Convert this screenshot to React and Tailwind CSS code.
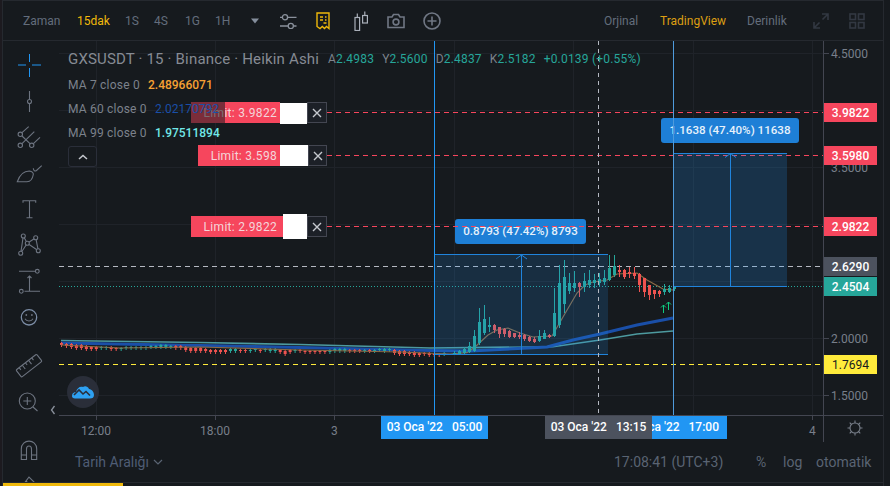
import React from "react";

const BG = "bg-[#161a1e]";

const candles = [
  [454, 351, 355, 353, 355, 1], [459, 350, 355, 351, 354, 1], [464, 347, 354, 349, 353, 1],
  [469, 342, 353, 346, 352, 1], [474, 330, 352, 336, 351, 1], [479, 308, 345, 322, 343, 1],
  [484, 305, 335, 319, 333, 1], [489, 317, 332, 325, 327, 1], [494, 324, 333, 325, 330, 0],
  [499, 327, 338, 327, 334, 0], [504, 328, 337, 329, 334, 0], [509, 330, 338, 331, 337, 0],
  [514, 333, 338, 333, 337, 0], [519, 332, 339, 335, 337, 0], [524, 334, 341, 335, 339, 0],
  [529, 336, 342, 337, 341, 0], [534, 337, 343, 339, 342, 0], [539, 330, 342, 336, 341, 1],
  [544, 330, 339, 333, 339, 1], [549, 334, 338, 335, 337, 0], [554, 288, 337, 313, 336, 1],
  [559, 265, 328, 283, 325, 1], [564, 260, 313, 277, 304, 1], [569, 273, 294, 283, 291, 1],
  [574, 271, 292, 283, 288, 1], [579, 282, 297, 283, 287, 0], [584, 273, 292, 281, 287, 1],
  [589, 270, 288, 280, 285, 1], [594, 274, 288, 280, 283, 1], [599, 273, 287, 279, 283, 1],
  [604, 270, 285, 278, 282, 1], [609, 255, 281, 268, 280, 1], [614, 255, 277, 266, 275, 1],
  [619, 265, 277, 270, 272, 0], [624, 269, 279, 270, 277, 0], [629, 267, 278, 272, 274, 0],
  [634, 267, 279, 273, 276, 0], [639, 273, 292, 274, 285, 0], [644, 278, 297, 278, 292, 0],
  [649, 285, 300, 285, 295, 0], [654, 290, 299, 290, 294, 0], [659, 290, 297, 291, 294, 0],
  [664, 284, 295, 289, 292, 1], [669, 285, 293, 288, 292, 1], [674, 286, 291, 287, 289, 1],
];

// flat part of the chart before the move: [green, top, height]
const flat = [
  [0, 343, 2], [0, 344, 2], [0, 344, 3], [0, 345, 3], [0, 345, 3], [0, 346, 3], [0, 347, 2], [0, 347, 2],
  [1, 347, 1], [1, 347, 1], [0, 347, 2], [0, 348, 1], [1, 348, 1], [1, 347, 1], [1, 347, 1], [1, 347, 1],
  [1, 347, 1], [1, 347, 1], [1, 346, 1], [1, 346, 1], [1, 345, 2], [1, 345, 2], [1, 346, 1], [0, 346, 2],
  [0, 346, 2], [0, 347, 3], [0, 348, 3], [0, 348, 3], [0, 348, 3], [0, 349, 2], [0, 350, 2], [0, 350, 2],
  [0, 350, 2], [0, 350, 2], [1, 349, 2], [1, 349, 2], [0, 350, 1], [0, 350, 1], [1, 350, 1], [1, 349, 1],
  [0, 350, 1], [1, 349, 1], [1, 349, 2], [1, 349, 2], [0, 350, 2], [0, 351, 3], [0, 350, 2], [1, 350, 1],
  [0, 350, 1], [0, 351, 1], [0, 351, 1], [0, 351, 1], [0, 351, 1], [0, 351, 1], [1, 350, 2], [1, 349, 2],
  [1, 349, 2], [1, 349, 2], [0, 350, 1], [0, 350, 1], [0, 350, 1], [1, 350, 1], [0, 350, 1], [1, 350, 1],
  [1, 349, 1], [1, 349, 2], [1, 349, 1], [0, 350, 3], [0, 351, 3], [0, 351, 3], [0, 352, 2], [0, 352, 3],
  [0, 353, 2], [0, 353, 1], [0, 353, 2], [0, 354, 1], [0, 354, 1], [1, 353, 1],
];

const ma7 = "M61 345 L120 348 L200 347 L300 350 L400 352 L450 354 L467 352.7 L475 347 L488 335 L497 330 L508 328 L520 333 L533 337 L552 336 L563 317 L577 293 L585 285 L593 282 L607 280 L617 274 L637 273 L647 280 L663 289 L673 290";
const ma60 = "M61 343 L200 345.5 L300 347.5 L430 350.5 L470 351 L547 347 L573 340 L600 334 L637 325 L673 318";
const ma99 = "M61 340.5 L200 342.5 L300 344.5 L430 348 L553 346.7 L600 340 L637 334 L673 331";

const gridX = [96, 215, 334, 454, 573, 693, 812];
const gridY = [53, 110, 167, 224, 281, 338, 395];

function ChartSvg() {
  return (
    <svg className="absolute inset-0 h-full w-full" viewBox="59 41 764 374">
      {gridX.map((x) => (
        <line key={x} x1={x + 0.5} x2={x + 0.5} y1="41" y2="415" stroke="#1f2329" />
      ))}
      {gridY.map((y) => (
        <line key={y} x1="59" x2="823" y1={y + 0.5} y2={y + 0.5} stroke="#1f2329" />
      ))}
      <line x1="59" x2="823" y1="266.5" y2="266.5" stroke="#b5b9c2" strokeDasharray="5 4" />
      <line x1="59" x2="823" y1="286.5" y2="286.5" stroke="#26a69a" strokeDasharray="1 2" />
      <line x1="59" x2="823" y1="364.5" y2="364.5" stroke="#ffeb3b" strokeDasharray="5 4" />
      <line x1="327" x2="823" y1="112.5" y2="112.5" stroke="#f6465d" strokeDasharray="5 4" />
      <line x1="327" x2="823" y1="155.5" y2="155.5" stroke="#f6465d" strokeDasharray="5 4" />

      <path d={ma99} fill="none" stroke="#4d9a9f" strokeWidth="1.6" />
      <path d={ma60} fill="none" stroke="#1a4fa8" strokeWidth="3" />
      {flat.map(([g, y, h], i) => (
        <g key={i} fill={g ? "#26a69a" : "#ef5350"}>
          <rect x={61 + i * 4.97} y={y - 1} width="1" height={h + 3} />
          <rect x={60 + i * 4.97} y={y} width="3" height={h} />
        </g>
      ))}
      <path d={ma7} fill="none" stroke="#8a6a45" strokeWidth="1.2" />
      {candles.map(([x, wt, wb, bt, bb, g]) => (
        <g key={x} fill={g ? "#26a69a" : "#ef5350"}>
          <rect x={x} y={wt} width="1" height={wb - wt} />
          <rect x={x - 1} y={bt} width="3" height={bb - bt} />
        </g>
      ))}

      <rect x="434" y="254" width="174" height="100" fill="#2196f3" fillOpacity="0.17" />
      <rect x="673" y="153" width="114" height="133" fill="#2196f3" fillOpacity="0.2" />
      <g stroke="#2084dc" fill="none">
        <path d="M434 254.5 H608 M434 354.5 H608 M521.5 254 V354 M516 259 L521.5 255 L527 259" />
        <path d="M673 153.5 H787 M673 286.5 H787 M730.5 153 V286 M725 157.5 L730.5 153.5 L736 157.5" />
      </g>
      <line x1="598.5" x2="598.5" y1="41" y2="415" stroke="#b5b9c2" strokeDasharray="4 4" />
      <line x1="434.5" x2="434.5" y1="41" y2="415" stroke="#2196f3" />
      <g stroke="#0ecb81" fill="none">
        <path d="M663.5 313 V305 M661 307.5 L663.5 305 L666 307.5" />
        <path d="M668.5 310 V302 M666 304.5 L668.5 302 L671 304.5" />
      </g>
    </svg>
  );
}

function LimitRow({ text, red, white, close }) {
  return (
    <>
      <div className={`absolute flex h-[21px] items-center justify-end bg-[#f6465d] text-[12px] tracking-[0.3px] text-[#f4d5da] ${red}`}>
        {text}
      </div>
      <div className={white}></div>
      <div className={close}>
        <svg width="12" height="12" viewBox="0 0 12 12" stroke="#c5c8ce" strokeWidth="1.4">
          <path d="M2 2 L10 10 M10 2 L2 10" />
        </svg>
      </div>
    </>
  );
}

function Cell({ className, children }) {
  return (
    <svg className={className} width="28" height="28" viewBox="0 0 28 28" fill="none" stroke="#6d7480" strokeWidth="1.1">
      {children}
    </svg>
  );
}

function LeftTools() {
  return (
    <div className="relative flex h-full w-[56px] shrink-0 flex-col overflow-hidden pl-[12px]">
      <Cell className="mt-[10px] shrink-0">
        <path stroke="#2196f3" strokeWidth="1" d="M3 14 H11 M17 14 H26 M14.5 3 V11 M14.5 17 V26" />
      </Cell>
      <Cell className="mt-[8px] shrink-0">
        <path d="M14.5 4 V12.5 M14.5 16.5 V25" />
        <circle cx="14.5" cy="14.5" r="2" />
      </Cell>
      <Cell className="mt-[11px] shrink-0">
        <circle cx="5.3" cy="8.3" r="2.2" />
        <circle cx="5.3" cy="19.3" r="2.2" />
        <circle cx="16.7" cy="19.3" r="2.2" />
        <path d="M7 6.7 L13.7 0.7 M7 17.7 L19.3 5.7 M18.4 17.7 L25 11.3 M7 10 L15 17.6" />
      </Cell>
      <Cell className="mt-[5px] shrink-0">
        <path d="M2.3 22.7 C5 15 9 12 14.3 12 C17 12.5 18.5 14 18.3 15.5 C17.5 20 15 22.7 12 22.7 Z" />
        <path d="M18.3 9.3 C18.5 12 20 12.5 21.5 11.5 L26.7 6.7" />
      </Cell>
      <Cell className="mt-[7px] shrink-0">
        <path d="M8 8.8 V6.7 H20.7 V8.8 M14.5 6.7 V23.7 M11.5 23.7 H17.5" />
      </Cell>
      <Cell className="mt-[8px] shrink-0">
        <path d="M8.3 6 L5.7 23.3 M8.3 6 L12.3 13.3 M12.3 13.3 L20.7 7.7 M20.7 7.7 L23.3 20.7 M12.3 13.3 L23.3 20.7 M12.3 13.3 L5.7 23.3" />
        <g fill="#161a1e">
          <circle cx="8.3" cy="6" r="2" />
          <circle cx="20.7" cy="7.7" r="2" />
          <circle cx="12.3" cy="13.3" r="2" />
          <circle cx="5.7" cy="23.3" r="2" />
          <circle cx="23.3" cy="20.7" r="2" />
        </g>
      </Cell>
      <Cell className="mt-[10px] shrink-0">
        <path d="M4 3.3 H20.5 M9.5 23.3 H25 M14.5 23.3 V8 M12.5 10 L14.5 8 L16.5 10" />
        <circle cx="22.3" cy="3.3" r="1.9" />
        <circle cx="6.3" cy="23.3" r="1.9" />
      </Cell>
      <Cell className="mt-[7px] shrink-0">
        <circle cx="14" cy="14.3" r="7.7" stroke="#7c8da6" strokeWidth="1.3" />
        <circle cx="11.3" cy="12" r="0.9" fill="#6d7480" stroke="none" />
        <circle cx="16.9" cy="12" r="0.9" fill="#6d7480" stroke="none" />
        <path d="M10 15.8 C11.5 18.7 16.5 18.7 18 15.8" />
      </Cell>
      <Cell className="mt-[22px] shrink-0">
        <g transform="rotate(-38 14 12.7)">
          <rect x="1" y="8.2" width="26" height="9" rx="1" />
          <path d="M5 8.2 V11 M9 8.2 V13 M13 8.2 V11 M17 8.2 V13 M21 8.2 V11" />
        </g>
      </Cell>
      <Cell className="mt-[6px] shrink-0">
        <circle cx="12.3" cy="14" r="8" />
        <path d="M12.3 10 V18 M8.3 14 H16.3 M18 20 L22.5 24" />
      </Cell>
      <Cell className="mt-[22px] shrink-0">
        <path d="M6.3 22.5 V12 C6.3 1.5 21.7 1.5 21.7 12 V22.5 H16.5 V12 C16.5 8 11.5 8 11.5 12 V22.5 Z M6.3 18 H11.5 M16.5 18 H21.7" />
      </Cell>
      <Cell className="mt-px shrink-0">
        <path d="M8 19 L14 11 L20 17 M11 15 L17 21 M8 19 V23 H12" />
      </Cell>
      <svg className="absolute left-[47px] top-[364px]" width="6" height="10" viewBox="0 0 6 10" fill="none" stroke="#8a919c" strokeWidth="1.3">
        <path d="M4.5 1 L1.5 5 L4.5 9" />
      </svg>
    </div>
  );
}

function TopBar() {
  return (
    <div className="flex h-[41px] shrink-0 items-center border-y border-[#25292f] text-[12px] text-[#636d7c]">
      <span className="ml-[20px] w-[37px]">Zaman</span>
      <span className="ml-[17px] w-[32px] text-[#f0b90b]">15dak</span>
      <span className="ml-[16px] w-[13px]">1S</span>
      <span className="ml-[16px] w-[14px]">4S</span>
      <span className="ml-[17px] w-[13px]">1G</span>
      <span className="ml-[17px] w-[14px]">1H</span>
      <svg className="ml-[21px]" width="10" height="6" viewBox="0 0 10 6" fill="#848e9c">
        <path d="M1 0.5 H9 L5 5.5 Z" />
      </svg>
      <svg className="ml-[19px]" width="20" height="16" viewBox="0 0 20 16" fill="none" stroke="#8a919c" strokeWidth="1.3">
        <path d="M1 4.3 H3.5 M9 4.3 H17.5 M1 13 H9 M15 13 H17.5" />
        <circle cx="6" cy="4.3" r="2.6" />
        <circle cx="11.8" cy="13" r="2.6" />
      </svg>
      <svg className="ml-[17px]" width="14" height="18" viewBox="0 0 14 18" fill="none" stroke="#f0b90b" strokeWidth="1.4">
        <path d="M1 1 H13 V16.5 L10.5 14.5 L8.5 16.5 L6.3 14.5 L4 16.5 L1 14.5 Z" />
        <path d="M4 5 H7 M9 5 H10.5 M4 8 H7 M9 8 H10.5 M7.5 11 H10.5" />
      </svg>
      <svg className="ml-[24px]" width="16" height="20" viewBox="0 0 16 20" fill="none" stroke="#aab0ba" strokeWidth="1.2">
        <rect x="1" y="6.5" width="4.6" height="13" />
        <path d="M3.3 6.5 V2.5 M10.8 4.5 V0.5" />
        <rect x="8.6" y="4.5" width="4.8" height="7.5" />
      </svg>
      <svg className="ml-[17px]" width="18" height="16" viewBox="0 0 18 16" fill="none" stroke="#707784" strokeWidth="1.6">
        <path d="M1 4 H5 L6.5 1.5 H11.5 L13 4 H17 V14.5 H1 Z" />
        <circle cx="9" cy="9" r="2.9" />
      </svg>
      <svg className="ml-[18px]" width="18" height="18" viewBox="0 0 18 18" fill="none" stroke="#707784" strokeWidth="1.6">
        <circle cx="9" cy="9" r="8" />
        <path d="M9 4.5 V13.5 M4.5 9 H13.5" />
      </svg>
      <span className="ml-[163px] w-[37px]">Orjinal</span>
      <span className="ml-[19px] w-[69px] text-[#dd9f12]">TradingView</span>
      <span className="ml-[18px] w-[43px]">Derinlik</span>
      <svg className="ml-[23px]" width="16" height="16" viewBox="0 0 16 16" fill="none" stroke="#323842" strokeWidth="1.6">
        <path d="M9 1 H15 V7 M15 1 L9.5 6.5 M7 15 H1 V9 M1 15 L6.5 9.5" />
      </svg>
      <svg className="ml-[20px]" width="16" height="16" viewBox="0 0 16 16" fill="none" stroke="#323842" strokeWidth="1.6">
        <rect x="1" y="1" width="5.5" height="5.5" />
        <rect x="9.5" y="1" width="5.5" height="5.5" />
        <rect x="1" y="9.5" width="5.5" height="5.5" />
        <rect x="9.5" y="9.5" width="5.5" height="5.5" />
      </svg>
    </div>
  );
}

export default function App() {
  return (
    <div
      className={`flex h-[486px] w-[890px] overflow-hidden ${BG}`}
      style={{ fontFamily: "Roboto, 'Liberation Sans', sans-serif" }}
    >
      <div className="w-[3px] shrink-0 border-r border-[#25292f] bg-[#1c1a1f]"></div>

      <div className="flex w-[880px] shrink-0 flex-col">
        <TopBar />

        <div className="flex h-[442px] shrink-0 border-b border-[#25292f]">
          <LeftTools />

          <div className="flex w-[824px] shrink-0 flex-col">
            <div className="flex h-[374px] shrink-0">
              {/* plot */}
              <div className="relative w-[764px] shrink-0 overflow-hidden">
                <ChartSvg />

                <LimitRow
                  text="Limit: 3.9822"
                  red="left-[132px] top-[61px] w-[89px] pr-[3px]"
                  white="absolute left-[221px] top-[62px] h-[21px] w-[27px] bg-white"
                  close="absolute left-[248px] top-[61px] flex h-[21px] w-[20px] items-center justify-center border border-[#434651] bg-[#1c2027]"
                />
                <div className="absolute left-[132px] top-[61px] h-[21px] w-[34px] bg-[#161a1e]/55"></div>

                <LimitRow
                  text="Limit: 3.598"
                  red="left-[139px] top-[104px] w-[82px] pr-[3px]"
                  white="absolute left-[221px] top-[104px] h-[21px] w-[28px] bg-white"
                  close="absolute left-[249px] top-[104px] flex h-[21px] w-[19px] items-center justify-center border border-[#434651] bg-[#1c2027]"
                />
                <LimitRow
                  text="Limit: 2.9822"
                  red="left-[132px] top-[175px] w-[92px] pr-[6px]"
                  white="absolute left-[224px] top-[173px] h-[25px] w-[24px] bg-white"
                  close="absolute left-[248px] top-[175px] flex h-[21px] w-[20px] items-center justify-center border border-[#434651] bg-[#1c2027]"
                />

                {/* legend */}
                <div className="absolute left-[9px] top-[8px] flex flex-col text-[12px] text-[#7c828c]">
                  <div className="flex h-[20px] items-center tracking-[0.2px]">
                    <span className="w-[260px] whitespace-nowrap text-[15px] tracking-[0.17px] text-[#868b94]">GXSUSDT · 15 · Binance · Heikin Ashi</span>
                    <span className="text-[#7c828c]">A</span>
                    <span className="text-[#26a69a]">2.4983</span>
                    <span className="ml-[8px]">Y</span>
                    <span className="text-[#26a69a]">2.5600</span>
                    <span className="ml-[8px]">D</span>
                    <span className="text-[#26a69a]">2.4837</span>
                    <span className="ml-[8px]">K</span>
                    <span className="text-[#26a69a]">2.5182</span>
                    <span className="ml-[8px] text-[#26a69a]">+0.0139 (+0.55%)</span>
                  </div>
                  <div className="mt-[4px] flex h-[24px] items-center">
                    <span className="w-[80px] tracking-[0.2px]">MA 7 close 0</span>
                    <span className="font-medium text-[#f7a133]">2.48966071</span>
                  </div>
                  <div className="flex h-[24px] items-center">
                    <span className="w-[87px] tracking-[0.2px]">MA 60 close 0</span>
                    <span className="text-[#1a4fa8]">2.02170792</span>
                  </div>
                  <div className="flex h-[24px] items-center">
                    <span className="w-[87px] tracking-[0.2px]">MA 99 close 0</span>
                    <span className="font-medium text-[#71e8e8]">1.97511894</span>
                  </div>
                  <div className="mt-px flex h-[21px] w-[29px] items-center justify-center rounded-[3px] border border-[#2a2e39]">
                    <svg width="10" height="6" viewBox="0 0 10 6" fill="none" stroke="#c5c8ce" strokeWidth="1.5">
                      <path d="M1 5 L5 1.5 L9 5" />
                    </svg>
                  </div>
                </div>

                {/* position bubbles */}
                <div className="absolute left-[396px] top-[178px] flex h-[25px] w-[131px] items-center justify-center rounded-[3px] bg-[#1e7fd6] text-[11.6px] font-medium text-[#e6f1fb]">
                  0.8793 (47.42%) 8793
                </div>
                <div className="absolute left-[602px] top-[77px] flex h-[25px] w-[138px] items-center justify-center rounded-[3px] bg-[#1e7fd6] text-[11.6px] font-medium text-[#e6f1fb]">
                  1.1638 (47.40%) 11638
                </div>

                {/* lines that run over the bubbles */}
                <svg className="absolute inset-0 h-full w-full" viewBox="59 41 764 374">
                  <line x1="327" x2="823" y1="226.5" y2="226.5" stroke="#f6465d" strokeDasharray="5 4" />
                  <line x1="673.5" x2="673.5" y1="41" y2="415" stroke="#4f9bdc" />
                </svg>

                <div className="absolute bottom-[7px] left-[8px] flex h-[32px] w-[32px] items-center justify-center rounded-full bg-[#2a2e39]">
                  <svg width="22" height="14" viewBox="0 0 22 14" fill="#2ea1f2">
                    <path d="M0 11 C0 8 2 7 4 7 C5 3 8 1 11 2 C13 0.5 16 1.5 17 4 C20 4.5 22 7 22 10 C22 12.5 20.5 13.5 18 13.5 H3 C1 13.5 0 12.5 0 11 Z" />
                    <path d="M2 10 L7 5 L11 9 L14 6.5 L18 10.5" fill="none" stroke="#2a2e39" strokeWidth="1.6" />
                  </svg>
                </div>
              </div>

              {/* price axis */}
              <div className="relative w-[60px] shrink-0 border-l border-[#434651] text-[12px] text-[#787f8a]">
                <span className="absolute left-[7px] top-[4px]">4.5000</span>
                <span className="absolute left-[7px] top-[118px]">3.5000</span>
                <span className="absolute left-[7px] top-[289px]">2.0000</span>
                <span className="absolute left-[7px] top-[346px]">1.5000</span>
                <div className="absolute left-0 top-[12px] h-px w-[5px] bg-[#434651]"></div>
                <div className="absolute left-0 top-[297px] h-px w-[5px] bg-[#434651]"></div>
                <div className="absolute left-0 top-[354px] h-px w-[5px] bg-[#434651]"></div>
                <div className="absolute left-0 top-[62px] flex h-[19px] w-[53px] items-center justify-center bg-[#f6465d] font-medium text-white">3.9822</div>
                <div className="absolute left-0 top-[105px] flex h-[19px] w-[53px] items-center justify-center bg-[#f6465d] font-medium text-white">3.5980</div>
                <div className="absolute left-0 top-[176px] flex h-[19px] w-[53px] items-center justify-center bg-[#f6465d] font-medium text-white">2.9822</div>
                <div className="absolute left-0 top-[216px] flex h-[19px] w-[53px] items-center justify-center bg-[#4c525e] font-medium text-white">2.6290</div>
                <div className="absolute left-0 top-[236px] flex h-[19px] w-[53px] items-center justify-center bg-[#26a69a] font-medium text-white">2.4504</div>
                <div className="absolute left-0 top-[314px] flex h-[19px] w-[53px] items-center justify-center bg-[#ffeb3b] text-[#161a1e]">1.7694</div>
              </div>
            </div>

            {/* time axis */}
            <div className="flex h-[27px] shrink-0 border-t border-[#434651]">
              <div className="relative w-[764px] shrink-0 overflow-hidden text-[12px] text-[#787f8a]">
                <div className="absolute left-[37px] top-0 h-[4px] w-px bg-[#434651]"></div>
                <div className="absolute left-[156px] top-0 h-[4px] w-px bg-[#434651]"></div>
                <div className="absolute left-[275px] top-0 h-[4px] w-px bg-[#434651]"></div>
                <div className="absolute left-[753px] top-0 h-[4px] w-px bg-[#434651]"></div>
                <span className="absolute left-[22px] top-[6px]">12:00</span>
                <span className="absolute left-[141px] top-[6px]">18:00</span>
                <span className="absolute left-[272px] top-[6px]">3</span>
                <span className="absolute left-[750px] top-[6px]">4</span>
                <div className="absolute left-[593px] top-[-1px] flex h-[24px] w-[75px] items-center justify-end whitespace-pre bg-[#2196f3] pr-[8px] font-medium text-white">ca '22   17:00</div>
                <div className="absolute left-[322px] top-[-1px] flex h-[24px] w-[107px] items-center justify-center whitespace-pre bg-[#2196f3] font-medium text-white">03 Oca '22   05:00</div>
                <div className="absolute left-[486px] top-[-1px] flex h-[24px] w-[107px] items-center justify-center whitespace-pre bg-[#4c525e] font-medium text-white">03 Oca '22   13:15</div>
              </div>
              <div className="flex w-[60px] shrink-0 items-center justify-center border-l border-[#434651] pb-[3px] pl-[2px]">
                <svg width="16" height="16" viewBox="0 0 16 16" fill="none" stroke="#787f8a" strokeWidth="1.1">
                  <circle cx="8" cy="8" r="5" />
                  <path d="M8 0.5 V3 M8 13 V15.5 M0.5 8 H3 M13 8 H15.5 M2.7 2.7 L4.5 4.5 M11.5 11.5 L13.3 13.3 M13.3 2.7 L11.5 4.5 M4.5 11.5 L2.7 13.3" />
                </svg>
              </div>
            </div>

            {/* bottom bar */}
            <div className="flex h-[40px] shrink-0 items-center text-[14px] text-[#5a6473]">
              <span className="ml-[16px] w-[75px] whitespace-nowrap text-[#4f5d75]">Tarih Aralığı</span>
              <svg className="ml-[3px]" width="10" height="6" viewBox="0 0 10 6" fill="none" stroke="#5a6473" strokeWidth="1.2">
                <path d="M1 1 L5 5 L9 1" />
              </svg>
              <span className="ml-[451px] w-[108px] whitespace-nowrap">17:08:41 (UTC+3)</span>
              <span className="ml-[34px] w-[13px]">%</span>
              <span className="ml-[14px] w-[19px]">log</span>
              <span className="ml-[14px] w-[56px]">otomatik</span>
            </div>
          </div>
        </div>
        <div className="h-[3px] w-[120px] shrink-0 bg-[#f0b90b]"></div>
      </div>

      <div className="w-[7px] shrink-0 border-l border-[#25292f]"></div>
    </div>
  );
}
